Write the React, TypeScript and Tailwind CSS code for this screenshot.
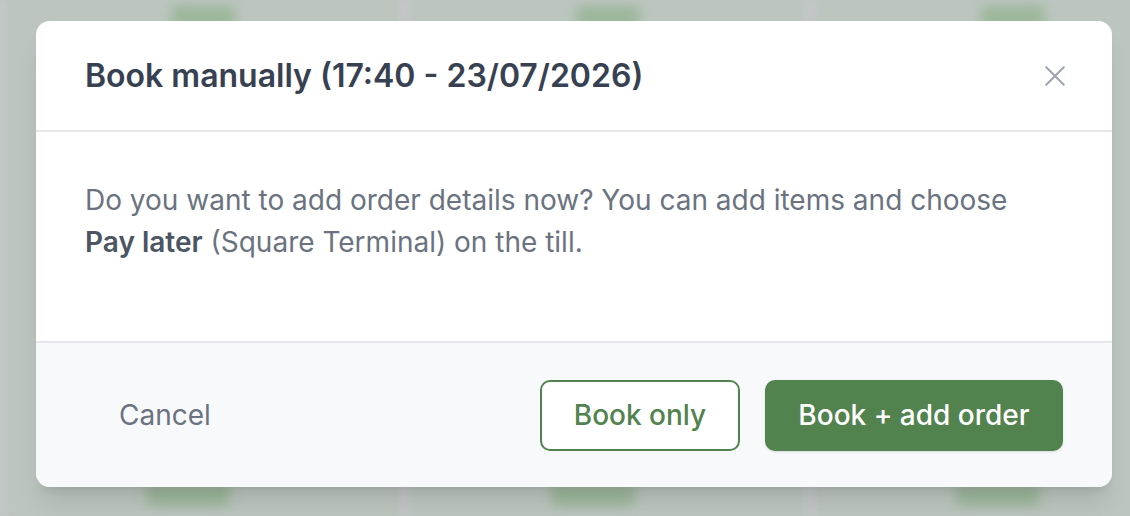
import React from "react";

function BackdropColumn() {
  return (
    <div className="flex h-full w-[405px] shrink-0">
      <div className="h-full w-[12px] bg-[#c3c6c8] blur-[3px]" />
      <div className="flex h-full flex-1 flex-col justify-between">
        <div className="ml-[165px] mt-[6px] h-[22px] w-[64px] rounded-md bg-[#9bb69a] blur-[6px]" />
        <div className="mb-[10px] ml-[140px] h-[22px] w-[84px] rounded-md bg-[#9cb79b] blur-[6px]" />
      </div>
    </div>
  );
}

export default function App() {
  return (
    <div
      className="relative h-[516px] w-[1130px] overflow-hidden bg-[#bcc6bf]"
      style={{ fontFamily: "Inter, 'Noto Sans', sans-serif" }}
    >
      <div className="flex h-full -ml-[6px]">
        <BackdropColumn />
        <BackdropColumn />
        <BackdropColumn />
      </div>

      <div className="absolute left-[36px] top-[21px] flex h-[466px] w-[1076px] flex-col overflow-hidden rounded-[14px] bg-white shadow-xl">
        <div className="flex h-[111px] shrink-0 items-center justify-between border-b-2 border-[#e5e7eb] pl-[49px] pr-[43px]">
          <h2 className="text-[32px] font-semibold leading-[40px] text-[#374151]">
            Book manually (17:40 - 23/07/2026)
          </h2>
          <button className="flex h-[28px] w-[28px] items-center justify-center text-[#9ca3af]">
            <svg width="28" height="28" viewBox="0 0 24 24" fill="none" stroke="currentColor" strokeWidth="1.7" strokeLinecap="round">
              <path d="M4.5 4.5l15 15M19.5 4.5l-15 15" />
            </svg>
          </button>
        </div>

        <div className="h-[209px] shrink-0 px-[49px] pt-[47px]">
          <p className="text-[28px] leading-[42px] text-[#6b7280]">
            Do you want to add order details now? You can add items and choose{" "}
            <span className="font-semibold text-[#4b5563]">Pay later</span> (Square Terminal) on the till.
          </p>
        </div>

        <div className="flex flex-1 items-center justify-between border-t-2 border-[#e5e7eb] bg-[#f8f9fb] pl-[49px] pr-[49px]">
          <button className="flex h-[71px] items-center px-[34px] text-[28px] text-[#6b7280]">
            Cancel
          </button>
          <div className="flex items-center gap-[25px]">
            <button className="flex h-[71px] w-[200px] items-center justify-center rounded-[10px] border-2 border-[#52834f] bg-white text-[28px] font-medium text-[#52834f]">
              Book only
            </button>
            <button className="flex h-[71px] w-[298px] items-center justify-center rounded-[10px] bg-[#52834f] text-[28px] font-medium text-white shadow-sm">
              Book + add order
            </button>
          </div>
        </div>
      </div>
    </div>
  );
}
